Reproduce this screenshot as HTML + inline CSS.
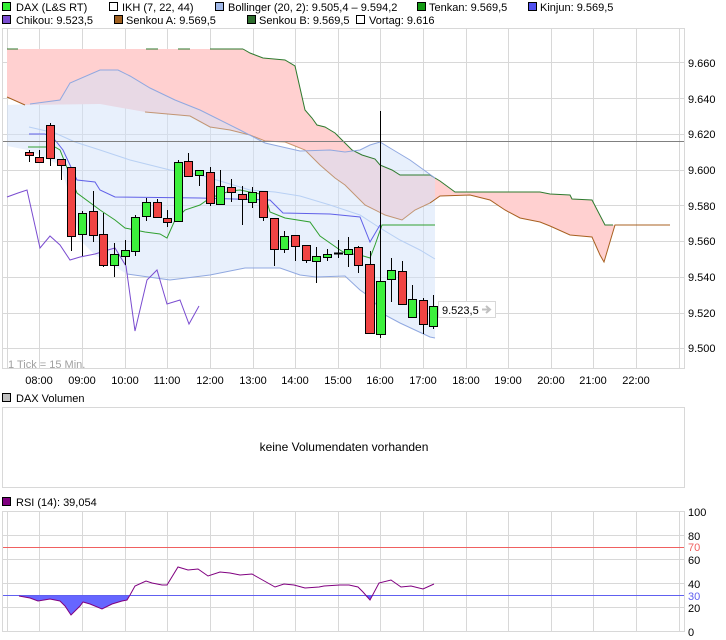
<!DOCTYPE html>
<html><head><meta charset="utf-8"><style>
html,body{margin:0;padding:0;background:#fff;width:726px;height:640px;overflow:hidden}
svg{display:block;font-family:"Liberation Sans",Arial,sans-serif;font-size:11px}
</style></head><body>
<svg width="726" height="640" viewBox="0 0 726 640" xmlns="http://www.w3.org/2000/svg">
<!-- legend -->
<g stroke="#000" stroke-width="1">
<rect x="2.5" y="2.5" width="8" height="8" fill="#33ee33"/>
<rect x="109.5" y="2.5" width="8" height="8" fill="#fff"/>
<rect x="215.5" y="2.5" width="8" height="8" fill="#a0b8e8"/>
<rect x="417.5" y="2.5" width="8" height="8" fill="#129a12"/>
<rect x="528.5" y="2.5" width="8" height="8" fill="#5050f0"/>
<rect x="2.5" y="15.5" width="8" height="8" fill="#7a4cd0"/>
<rect x="114.5" y="15.5" width="8" height="8" fill="#a06020"/>
<rect x="247.5" y="15.5" width="8" height="8" fill="#2e6e2e"/>
<rect x="356.5" y="15.5" width="8" height="8" fill="#fff"/>
</g>
<g fill="#000">
<text x="16" y="11">DAX (L&amp;S RT)</text>
<text x="122" y="11">IKH (7, 22, 44)</text>
<text x="228" y="11">Bollinger (20, 2): 9.505,4 – 9.594,2</text>
<text x="429" y="11">Tenkan: 9.569,5</text>
<text x="540" y="11">Kinjun: 9.569,5</text>
<text x="16" y="24">Chikou: 9.523,5</text>
<text x="126" y="24">Senkou A: 9.569,5</text>
<text x="259" y="24">Senkou B: 9.569,5</text>
<text x="369" y="24">Vortag: 9.616</text>
</g>
<!-- main chart frame -->
<rect x="2.5" y="28.5" width="682" height="340" fill="#fff" stroke="#d8d8d8"/>
<g stroke="#d8d8d8" stroke-width="1">
<path d="M7.5 29V368M39.5 29V368M82.5 29V368M125.5 29V368M167.5 29V368M210.5 29V368M253.5 29V368M295.5 29V368M338.5 29V368M380.5 29V368M423.5 29V368M466.5 29V368M508.5 29V368M551.5 29V368M593.5 29V368M636.5 29V368M679.5 29V368"/>
<path d="M3 62.5H684M3 98.5H684M3 134.5H684M3 170.5H684M3 205.5H684M3 241.5H684M3 277.5H684M3 313.5H684M3 348.5H684"/>
</g>
<!-- cloud -->
<polygon fill="#ffd0d0" points="7,49 243,49 250,53 263,58 285,60 295,66 305,110 312,118 317,125 325,127 335,133 345,143 352,150 362,155 375,159 380,165 392,170 400,175 430,175 440,181 455,192 475,192 540,192 550,194 570,195 572,199 592,200 605,225 613,225 670,225 615,225 612,235 604,262 600,255 592,237 570,235 550,226 540,222 520,218 505,210 490,200 470,195 440,196 430,203 415,210 402,220 385,215 365,205 345,185 335,178 320,165 305,150 295,146 285,142 265,141 250,135 230,130 210,127 190,116 145,112 100,104 25,105 7,97"/>
<!-- bollinger fill -->
<polygon fill="rgba(209,225,249,0.5)" points="7,105 30,104 60,100 70,83 100,70 118,70 130,76 150,88 175,100 200,110 240,130 265,143 300,151 330,150 345,152 360,150 370,145 380,142 390,148 410,160 435,178 435,338 430,337 415,330 400,323 385,315 370,297 360,290 345,276 316,277 300,275 280,268 245,268 210,275 170,280 127,274 95,255 80,240 68,190 60,165 28,150 7,146"/>
<!-- cloud edges -->
<polyline fill="none" stroke="#2e7a2e" points="243,49 250,53 263,58 285,60 295,66 305,110 312,118 317,125 325,127 335,133 345,143 352,150 362,155 375,159 380,165 392,170 400,175 430,175 440,181 455,192 475,192 540,192 550,194 570,195 572,199 592,200 605,225 613,225"/>
<path d="M7 49H18M146 49H158M178 49H190M210 49H243" stroke="#2e7a2e"/>
<polyline fill="none" stroke="#a86020" points="7,97 25,105"/>
<polyline fill="none" stroke="#a86020" stroke-opacity="0.6" points="145,112 190,116 210,127 230,130 250,135 265,141 285,142 295,146 305,150 320,165 335,178 345,185 365,205 385,215 402,220 415,210 430,203"/>
<polyline fill="none" stroke="#a86020" points="430,203 440,196 470,195 490,200 505,210 520,218 540,222 550,226 570,235 592,237 600,255 604,262 612,235 615,225 670,225"/>
<!-- bollinger lines -->
<polyline fill="none" stroke="#90a8e0" points="30,104 60,100 70,83 100,70 118,70 130,76 150,88 175,100 200,110 240,130 265,143 300,151 330,150 345,152 360,150 370,145 380,142 390,148 410,160 435,178"/>
<polyline fill="none" stroke="#90a8e0" points="127,274 170,280 210,275 245,268 280,268 300,275 316,277 345,276 360,290 370,297 385,315 400,323 415,330 430,337 435,338"/>
<polyline fill="none" stroke="#b8d0f4" points="29,127 55,133 75,142 100,150 130,160 170,170 200,175 250,190 275,192 300,196 330,205 360,215 380,228 400,240 420,250 435,259"/>
<!-- kijun -->
<polyline fill="none" stroke="#6060e8" points="29,134 45,134 55,140 63,150 77,180 95,182 100,190 115,197 200,198 270,200 283,213 330,214 360,217 370,242 380,225"/>
<!-- tenkan -->
<path d="M28 147H46" stroke="#30a030"/>
<polyline fill="none" stroke="#30a030" points="55,147 60,150 77,193 100,210 115,220 125,228 135,230 145,232 160,234 167,238 175,220 185,210 200,205 210,198 230,191 240,190 255,193 265,195 270,212 285,218 310,222 320,236 340,250 345,253 360,255 370,258 375,245 382,225 435,225"/>
<!-- chikou -->
<polyline fill="none" stroke="#7a4cd0" points="7,197 18,193 27,190 40,248 50,236 60,245 70,260 80,257 95,254 108,250 115,248 126,266 135,331 147,280 157,270 167,304 180,300 189,324 199,306"/>
<!-- vortag line -->
<path d="M3 141.5H684" stroke="#808080"/>
<!-- candles -->
<g stroke="#000" stroke-width="1">
<path d="M29.5 150V162M39.5 150V163M50.5 123V166M61.5 159V180M71.5 167V251M82.5 211V256M93.5 191V242M103.5 213V267M114.5 243V277M125.5 240V265M135.5 215V256M146.5 198V221M157.5 199V218M167.5 210V227M178.5 160V221M188.5 153V176M199.5 170V186M210.5 167V206M220.5 170V204M231.5 179V202M242.5 186V225M252.5 187V208M263.5 191V221M274.5 218V266M284.5 231V253M295.5 235V261M306.5 245V263M316.5 247V283M327.5 249V261M338.5 240V258M348.5 237V267M358.5 246V273M370.5 251V333M380.5 111V338M391.5 258V302M402.5 261V305M412.5 285V317M423.5 298V334M433.5 295V329"/>
<g fill="#f04444">
<rect x="25.5" y="152.5" width="8" height="3"/>
<rect x="35.5" y="157.5" width="8" height="5"/>
<rect x="46.5" y="125.5" width="8" height="33"/>
<rect x="57.5" y="159.5" width="8" height="6"/>
<rect x="67.5" y="167.5" width="8" height="69"/>
<rect x="89.5" y="211.5" width="8" height="24"/>
<rect x="99.5" y="234.5" width="8" height="31"/>
<rect x="153.5" y="202.5" width="8" height="15"/>
<rect x="163.5" y="218.5" width="8" height="4"/>
<rect x="184.5" y="161.5" width="8" height="15"/>
<rect x="206.5" y="172.5" width="8" height="31"/>
<rect x="227.5" y="187.5" width="8" height="5"/>
<rect x="238.5" y="194.5" width="8" height="5"/>
<rect x="259.5" y="191.5" width="8" height="26"/>
<rect x="270.5" y="218.5" width="8" height="31"/>
<rect x="291.5" y="235.5" width="8" height="11"/>
<rect x="302.5" y="245.5" width="8" height="15"/>
<rect x="354.5" y="247.5" width="8" height="18"/>
<rect x="365.5" y="264.5" width="9" height="69"/>
<rect x="398.5" y="271.5" width="8" height="33"/>
<rect x="419.5" y="300.5" width="8" height="24"/>
</g>
<g fill="#3cf03c">
<rect x="78.5" y="213.5" width="8" height="21"/>
<rect x="110.5" y="254.5" width="8" height="11"/>
<rect x="121.5" y="250.5" width="8" height="6"/>
<rect x="131.5" y="217.5" width="8" height="34"/>
<rect x="142.5" y="202.5" width="8" height="14"/>
<rect x="174.5" y="162.5" width="8" height="59"/>
<rect x="195.5" y="170.5" width="8" height="5"/>
<rect x="216.5" y="186.5" width="8" height="18"/>
<rect x="248.5" y="192.5" width="8" height="10"/>
<rect x="280.5" y="236.5" width="8" height="13"/>
<rect x="312.5" y="256.5" width="8" height="5"/>
<rect x="323.5" y="254.5" width="8" height="3"/>
<rect x="344.5" y="249.5" width="8" height="5"/>
<rect x="376.5" y="281.5" width="9" height="53"/>
<rect x="387.5" y="270.5" width="8" height="9"/>
<rect x="408.5" y="299.5" width="8" height="18"/>
<rect x="429.5" y="306.5" width="8" height="20"/>
</g>
<path d="M334 253.5H343" stroke-width="2"/>
</g>
<!-- price label -->
<rect x="438.5" y="301.5" width="57" height="16" fill="#fff" stroke="#d8d8d8"/>
<text x="442" y="314" fill="#000">9.523,5</text>
<path d="M482 309.5H489M486 306L490 309.5L486 313" stroke="#c0c0c0" stroke-width="2" fill="none"/>
<!-- y axis labels -->
<g fill="#000">
<text x="688" y="67">9.660</text>
<text x="688" y="103">9.640</text>
<text x="688" y="138">9.620</text>
<text x="688" y="174">9.600</text>
<text x="688" y="210">9.580</text>
<text x="688" y="245">9.560</text>
<text x="688" y="281">9.540</text>
<text x="688" y="317">9.520</text>
<text x="688" y="352">9.500</text>
</g>
<text x="8" y="368" fill="#a0a0a0">1 Tick = 15 Min.</text>
<g fill="#000" text-anchor="middle">
<text x="39" y="384">08:00</text><text x="82" y="384">09:00</text><text x="125" y="384">10:00</text><text x="167" y="384">11:00</text><text x="210" y="384">12:00</text><text x="253" y="384">13:00</text><text x="295" y="384">14:00</text><text x="338" y="384">15:00</text><text x="380" y="384">16:00</text><text x="423" y="384">17:00</text><text x="466" y="384">18:00</text><text x="508" y="384">19:00</text><text x="551" y="384">20:00</text><text x="593" y="384">21:00</text><text x="636" y="384">22:00</text>
</g>
<!-- volume -->
<rect x="2.5" y="393.5" width="8" height="8" fill="#c0c0c0" stroke="#000"/>
<text x="16" y="402">DAX Volumen</text>
<rect x="2.5" y="407.5" width="682" height="80" fill="#fff" stroke="#d8d8d8"/>
<text x="344" y="451" text-anchor="middle" font-size="12">keine Volumendaten vorhanden</text>
<!-- RSI -->
<rect x="2.5" y="497.5" width="8" height="8" fill="#800080" stroke="#000"/>
<text x="16" y="506">RSI (14): 39,054</text>
<rect x="2.5" y="511.5" width="682" height="120" fill="#fff" stroke="#d8d8d8"/>
<g stroke="#d8d8d8">
<path d="M7.5 512V631M39.5 512V631M82.5 512V631M125.5 512V631M167.5 512V631M210.5 512V631M253.5 512V631M295.5 512V631M338.5 512V631M380.5 512V631M423.5 512V631M466.5 512V631M508.5 512V631M551.5 512V631M593.5 512V631M636.5 512V631M679.5 512V631"/>
<path d="M3 535.5H684M3 559.5H684M3 583.5H684M3 607.5H684"/>
</g>
<path d="M3 547.5H684" stroke="#f06060"/>
<polygon fill="#6666ff" points="19,595.5 30,598 38,601 50,599 60,601 65,606 71,615 80,606 83,602 90,604 102,609 112,604 122,601 127,600 130,595.5"/>
<polygon fill="#6666ff" points="365,595.5 370,600 373,595.5"/>
<path d="M3 595.5H684" stroke="#6060f0"/>
<polyline fill="none" stroke="#800080" points="19,596 30,598 38,601 50,599 60,601 65,606 71,615 80,606 83,602 90,604 102,609 112,604 122,601 127,600 130,595 135,586 146,581 152,583 162,585 167,585 178,567 188,570 198,569 208,576 220,572 230,573 240,575 252,574 259,578 275,587 284,584 294,585 305,588 319,587 324,586 340,585 349,585 358,587 363,592 370,600 379,583 391,580 401,587 411,586 423,589 434,584"/>
<g fill="#000">
<text x="688" y="516">100</text>
<text x="688" y="540">80</text>
<text x="688" y="551" fill="#f06060">70</text>
<text x="688" y="564">60</text>
<text x="688" y="588">40</text>
<text x="688" y="600" fill="#6060f0">30</text>
<text x="688" y="612">20</text>
<text x="688" y="636">0</text>
</g>
</svg>
</body></html>
